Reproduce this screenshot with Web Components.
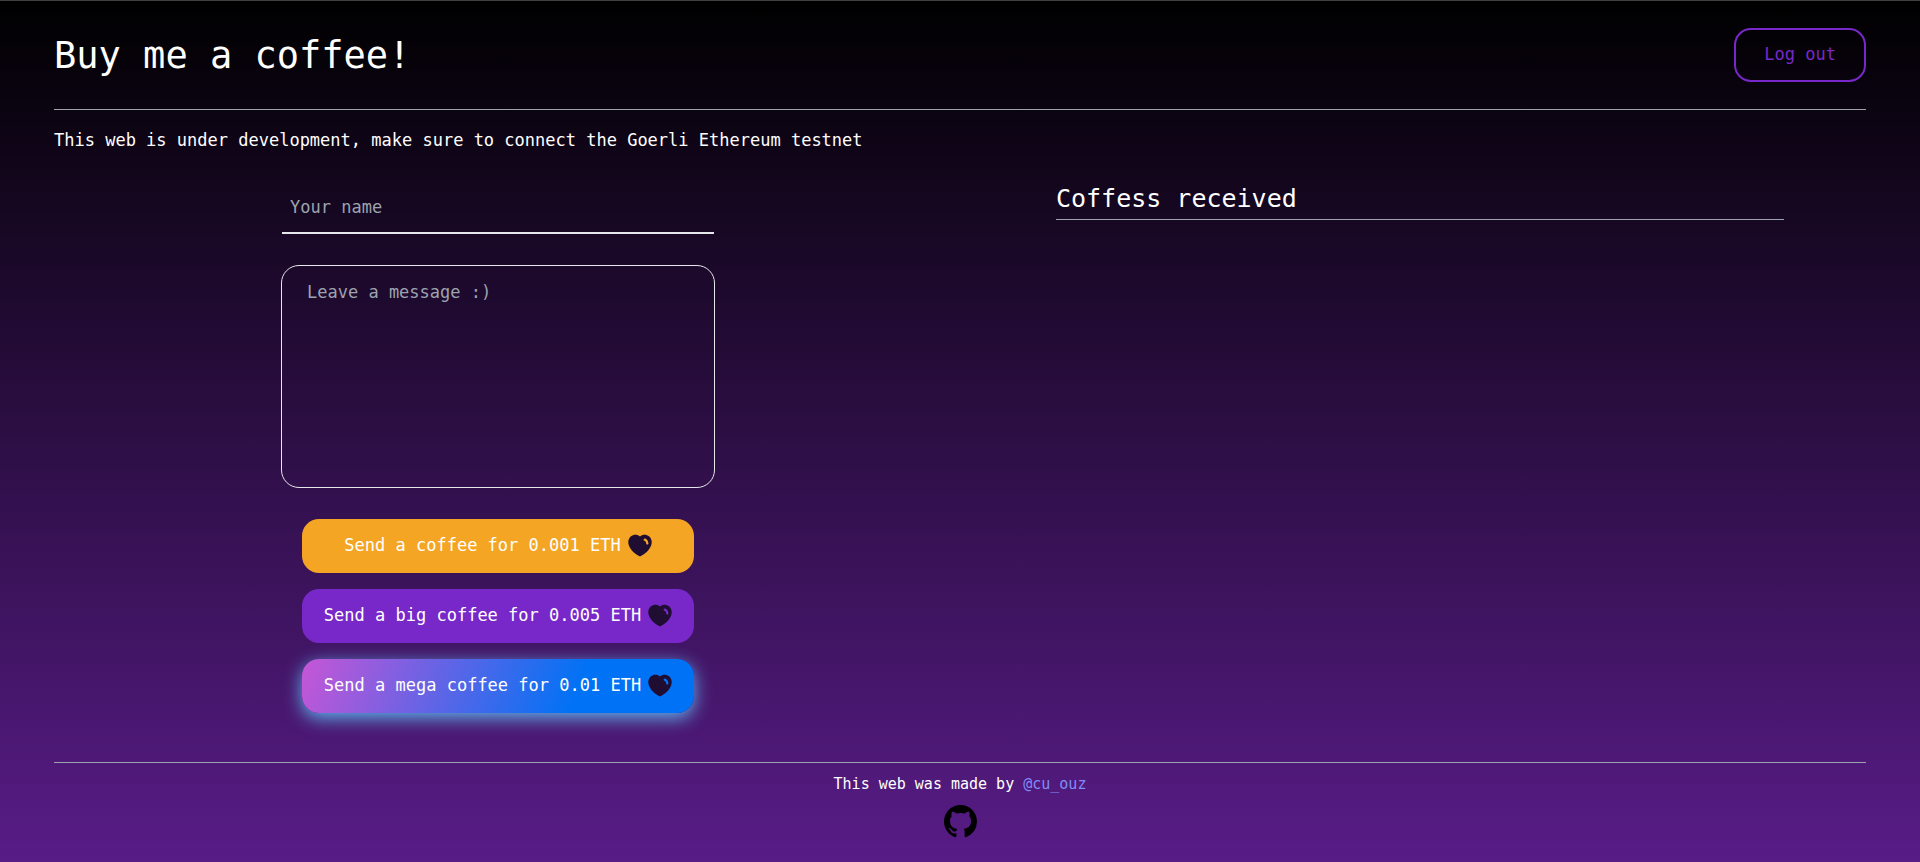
<!DOCTYPE html>
<html lang="en">
<head>
<meta charset="utf-8">
<meta name="viewport" content="width=device-width, initial-scale=1">
<title>Buy me a coffee!</title>
<style>
  body { margin: 0; background: #000; color: #fff; font: 17px/24px "DejaVu Sans Mono", "Liberation Mono", monospace; }
</style>
</head>
<body>
<coffee-page>
  <page-header slot="header">
    <span>Buy me a coffee!</span>
    <coffee-button slot="action" variant="bordered">Log out</coffee-button>
  </page-header>
  <span slot="notice">This web is under development, make sure to connect the Goerli Ethereum testnet</span>
  <coffee-form>
    <coffee-button variant="warning" heart>Send a coffee for 0.001 ETH</coffee-button>
    <coffee-button variant="secondary" heart>Send a big coffee for 0.005 ETH</coffee-button>
    <coffee-button variant="gradient" heart>Send a mega coffee for 0.01 ETH</coffee-button>
  </coffee-form>
  <coffee-list>Coffess received</coffee-list>
  <page-footer slot="footer">This web was made by <credit-link href="https://twitter.com/cu_ouz">@cu_ouz</credit-link></page-footer>
</coffee-page>

<script>
const define = (name, html, setup) => {
  const template = document.createElement('template');
  template.innerHTML = '<style>*{box-sizing:border-box}:host{box-sizing:border-box}</style>' + html;
  customElements.define(name, class extends HTMLElement {
    constructor() {
      super();
      this.attachShadow({ mode: 'open' }).append(template.content.cloneNode(true));
    }
    connectedCallback() { if (setup) setup(this, this.shadowRoot); }
  });
};

define('coffee-page', `
  <style>
    :host { display: flex; flex-direction: column; min-height: 100vh; padding: 0 54px 24px;
      border-top: 1px solid #404040; background: linear-gradient(to bottom, #000, #581c87); }
    p { margin: 18px 0 28px; }
    main { flex: 1; display: grid; grid-template-columns: 1fr 1fr; gap: 34px; padding-right: 2px; justify-items: center; align-items: start; }
  </style>
  <slot name="header"></slot>
  <p><slot name="notice"></slot></p>
  <main><slot></slot></main>
  <slot name="footer"></slot>`);

define('page-header', `
  <style>
    :host { display: block; border-bottom: 1px solid #9ca3af; padding: 27px 0; }
    header { display: flex; align-items: center; justify-content: space-between; }
    h1 { margin: 0; padding-top: 2px; font-size: 37px; line-height: 52px; font-weight: 400; }
  </style>
  <header><h1><slot></slot></h1><slot name="action"></slot></header>`);

define('coffee-button', `
  <style>
    :host { display: block; }
    button { display: flex; align-items: center; justify-content: center; gap: 7px; width: 100%; height: 54px;
      padding: 0 28px; border: 0; border-radius: 17px; color: #fff; font: inherit; white-space: nowrap; cursor: pointer; }
    span { padding-bottom: 2px; }
    svg { display: none; flex: none; width: 24px; height: 24px; }
    :host([heart]) svg { display: block; }
    :host([heart]) button { padding: 0 16px; }
    :host([variant="bordered"]) button { background: transparent; border: 2px solid #7828c8; color: #7828c8; }
    :host([variant="warning"]) button { background: #f5a524; }
    :host([variant="secondary"]) button { background: #7828c8; }
    :host([variant="gradient"]) button {
      background: linear-gradient(112deg, #06b7db -64%, #ff4ecd -20%, #0072f5 70%);
      box-shadow: 0 5px 18px #5eb2ee; }
  </style>
  <button type="button"><span><slot></slot></span>
    <svg viewBox="0 0 24 24" aria-hidden="true"><path fill="#200e32" fill-rule="evenodd" d="M12 2.400C10.300 1 7.500.4 5 1.200.7 2.700-.6 7.100.8 11.300 2.600 16.500 7.300 20 12 22.600 16.700 20 21.400 16.500 23.200 11.300 24.600 7.100 23.300 2.700 19 1.200 16.500.4 13.700 1 12 2.400ZM17.200 4.600C16.500 4.400 15.900 4.700 15.700 5.300 15.500 5.900 15.800 6.500 16.400 6.700 17.500 7.100 18.200 8.200 18.200 9.400 18.200 10.100 18.700 10.600 19.300 10.600 20 10.600 20.500 10.100 20.400 9.400 20.300 7.200 19 5.300 17.200 4.600Z"/></svg>
  </button>`);

define('coffee-form', `
  <style>
    :host { display: block; width: 434px; max-width: 100%; }
    form { display: flex; flex-direction: column; gap: 31px; }
    input, textarea { display: block; background: transparent; color: #fff; font: inherit; outline: 0; }
    input { height: 54px; margin: 0 1px; padding: 2px 8px 0; border: 0; border-bottom: 2px solid #e5e7eb; border-radius: 0; }
    textarea { height: 223px; padding: 14px 25px; border: 1px solid #e5e7eb; border-radius: 18px; resize: none; }
    ::placeholder { color: #9ca3af; opacity: 1; }
    .actions { display: grid; gap: 16px; padding: 0 21px; }
  </style>
  <form>
    <input type="text" aria-label="Your name" placeholder="Your name">
    <textarea aria-label="Message" placeholder="Leave a message :)"></textarea>
    <div class="actions"><slot></slot></div>
  </form>`);

define('coffee-list', `
  <style>
    :host { display: block; width: 82%; }
    h2 { margin: 0; padding: 1px 0 3px; border-bottom: 1px solid #9ca3af; font-size: 25px; line-height: 35px; font-weight: 400; }
  </style>
  <h2><slot></slot></h2>`);

define('credit-link', `
  <style>:host { display: inline; } a { color: #818cf8; text-decoration: none; }</style>
  <a><slot></slot></a>`, (el, root) => { root.querySelector('a').href = el.getAttribute('href'); });

define('page-footer', `
  <style>
    :host { display: block; border-top: 1px solid #9ca3af; margin-top: 47px; }
    footer { display: flex; flex-direction: column; align-items: center; gap: 9px; padding-top: 9px; font-size: 15px; }
    p { margin: 0; }
    a { display: block; color: #000; }
    svg { display: block; width: 33px; height: 33px; }
  </style>
  <footer>
    <p><slot></slot></p>
    <a href="https://github.com" aria-label="GitHub"><svg viewBox="0 0 16 16" fill="currentColor" aria-hidden="true"><path d="M8 0C3.580 0 0 3.580 0 8c0 3.540 2.290 6.530 5.470 7.590.4.070.55-.17.55-.38 0-.19-.01-.82-.01-1.490-2.010.37-2.530-.49-2.690-.94-.09-.23-.48-.94-.82-1.130-.28-.15-.68-.52-.01-.53.63-.01 1.080.58 1.230.82.72 1.210 1.870.87 2.330.66.07-.52.28-.87.51-1.070-1.780-.2-3.640-.89-3.640-3.950 0-.87.31-1.590.82-2.150-.08-.2-.36-1.020.08-2.120 0 0 .67-.21 2.200.82.64-.18 1.320-.27 2-.27s1.360.09 2 .27c1.530-1.040 2.200-.82 2.200-.82.44 1.100.16 1.920.08 2.120.51.56.82 1.270.82 2.150 0 3.070-1.870 3.750-3.650 3.950.29.25.54.73.54 1.480 0 1.070-.01 1.930-.01 2.200 0 .21.15.46.55.38A8.010 8.010 0 0 0 16 8c0-4.420-3.580-8-8-8Z"/></svg></a>
  </footer>`);
</script>
</body>
</html>
